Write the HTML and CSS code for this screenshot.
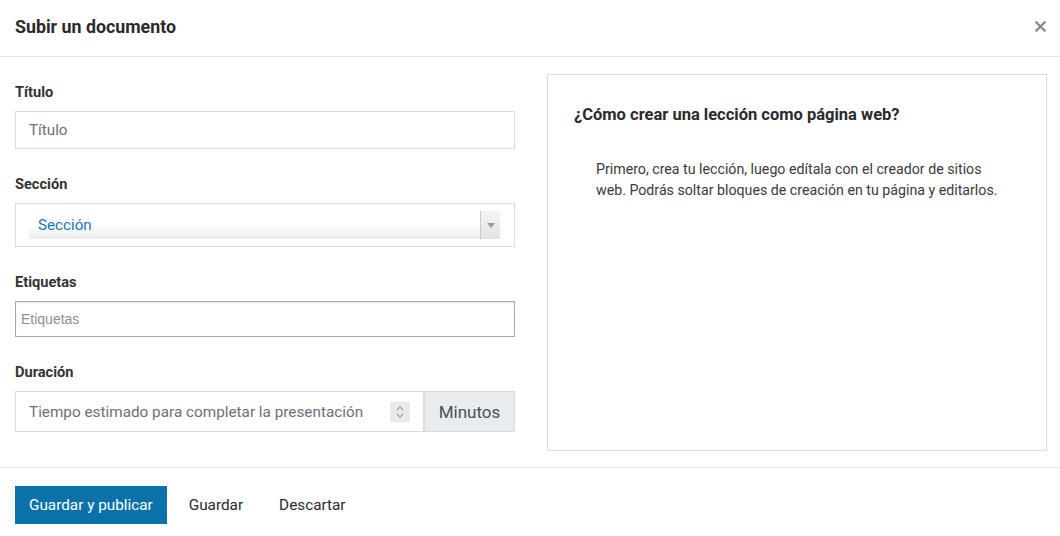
FILE: index.html
```html
<!DOCTYPE html>
<html lang="es">
<head>
<meta charset="utf-8">
<title>Subir un documento</title>
<link rel="stylesheet" href="styles.css">
</head>
<body>
<div class="modal">
  <div class="modal-header">
    <h1 class="modal-title">Subir un documento</h1>
    <span class="close"><svg width="11" height="11" viewBox="0 0 11 11"><path d="M1.5 1.5 L9.5 9.5 M9.5 1.5 L1.5 9.5" stroke="#8a8a8a" stroke-width="2.4" stroke-linecap="square"/></svg></span>
  </div>
  <div class="modal-body">
    <div class="form-col">
      <div class="field">
        <label class="label">Título</label>
        <div class="input">Título</div>
      </div>
      <div class="field">
        <label class="label">Sección</label>
        <div class="select">
          <div class="select-inner">
            <span class="select-text">Sección</span>
            <span class="select-arrow"><span class="tri"></span></span>
          </div>
        </div>
      </div>
      <div class="field">
        <label class="label">Etiquetas</label>
        <div class="tags">Etiquetas</div>
      </div>
      <div class="field">
        <label class="label">Duración</label>
        <div class="group">
          <div class="group-input">
            <span class="ph">Tiempo estimado para completar la presentación</span>
            <span class="spinner">
              <svg width="10" height="16" viewBox="0 0 10 16"><path d="M2 6 L5 3 L8 6" fill="none" stroke="#9a9a9a" stroke-width="1.1"/><path d="M2 10 L5 13 L8 10" fill="none" stroke="#9a9a9a" stroke-width="1.1"/></svg>
            </span>
          </div>
          <div class="addon">Minutos</div>
        </div>
      </div>
    </div>
    <div class="help">
      <h2 class="help-title">¿Cómo crear una lección como página web?</h2>
      <p class="help-text">Primero, crea tu lección, luego edítala con el creador de sitios web. Podrás soltar bloques de creación en tu página y editarlos.</p>
    </div>
  </div>
  <div class="modal-footer">
    <button class="btn btn-primary">Guardar y publicar</button>
    <button class="btn">Guardar</button>
    <button class="btn">Descartar</button>
  </div>
</div>
</body>
</html>
```
FILE: styles.css
```css
* { box-sizing: border-box; }
html, body { margin: 0; padding: 0; background: #fff; }
body {
  font-family: Roboto, "Liberation Sans", Arial, sans-serif;
  color: #212529;
  width: 1060px;
  height: 536px;
  overflow: hidden;
}
.modal { width: 1060px; }
.modal-header {
  height: 57px;
  border-bottom: 1px solid #e6e6e6;
  display: flex;
  align-items: center;
  justify-content: space-between;
  padding: 0 14px 4px 15px;
}
.modal-title {
  margin: 0;
  font-size: 17.8px;
  font-weight: 700;
  color: #2a2a2a;
}
.close {
  display: flex;
  margin-top: 0;
}
.modal-body {
  display: flex;
  gap: 32px;
  padding: 17px 13px 16px 15px;
  border-bottom: 1px solid #e6e6e6;
}
.form-col {
  width: 500px;
  padding-top: 8px;
  display: flex;
  flex-direction: column;
  gap: 25px;
}
.field { display: flex; flex-direction: column; }
.label {
  font-size: 14.6px;
  font-weight: 700;
  line-height: 20px;
  color: #333;
  margin-bottom: 9px;
}
.input {
  height: 38px;
  border: 1px solid #dcdcdc;
  padding-left: 13px;
  font-size: 15.2px;
  line-height: 36px;
  color: #6c7077;
}
.select {
  height: 44px;
  border: 1px solid #dcdcdc;
  padding: 7px 14px 7px 13px;
}
.select-inner {
  height: 28px;
  display: flex;
  align-items: stretch;
  justify-content: space-between;
  background: linear-gradient(#ffffff 0%, #ffffff 45%, #ececec 100%);
}
.select-text {
  font-size: 15.2px;
  line-height: 28px;
  color: #1b76b4;
  padding-left: 9px;
}
.select-arrow {
  width: 20px;
  border-left: 1px solid #c8c8c8;
  background: linear-gradient(#f4f4f4, #e2e2e2);
  display: flex;
  align-items: center;
  justify-content: center;
}
.tri {
  width: 0; height: 0;
  border-left: 4px solid transparent;
  border-right: 4px solid transparent;
  border-top: 5px solid #9a9a9a;
}
.tags {
  height: 36px;
  border: 1px solid #a9a9a9;
  box-shadow: inset 0 1px 2px rgba(0,0,0,0.08);
  font-family: "Liberation Sans", Arial, sans-serif;
  font-size: 14px;
  line-height: 34px;
  padding-left: 5px;
  color: #8f8f8f;
}
.group {
  display: flex;
  height: 41px;
}
.group-input {
  flex: 1;
  border: 1px solid #dcdcdc;
  display: flex;
  align-items: center;
  justify-content: space-between;
  padding: 0 13px 0 13px;
}
.ph {
  font-size: 15.3px;
  color: #6c7077;
}
.spinner {
  width: 20px;
  height: 20px;
  background: #eaeaee;
  display: flex;
  align-items: center;
  justify-content: center;
  margin-top: 1px;
}
.addon {
  width: 91px;
  background: #e9ecef;
  border: 1px solid #d6d9dc;
  border-left: 1px solid #dcdcdc;
  font-size: 17px;
  color: #4a4f55;
  display: flex;
  align-items: center;
  justify-content: center;
}
.help {
  width: 500px;
  height: 377px;
  border: 1px solid #dcdcdc;
  padding: 29px 26px;
}
.help-title {
  margin: 0;
  font-size: 16.5px;
  font-weight: 700;
  line-height: 22px;
  color: #2a2a2a;
}
.help-text {
  margin: 33px 0 0 22px;
  font-size: 14.2px;
  line-height: 21px;
  color: #3a3a3a;
  max-width: 412px;
}
.modal-footer {
  display: flex;
  gap: 8px;
  padding: 18px 15px;
}
.btn {
  height: 38px;
  padding: 0 14px;
  border: 0;
  background: transparent;
  font-family: Roboto, "Liberation Sans", Arial, sans-serif;
  font-size: 15.3px;
  color: #2a2a2a;
  cursor: pointer;
}
.btn-primary {
  background: #0a72a8;
  color: #fff;
}
```
